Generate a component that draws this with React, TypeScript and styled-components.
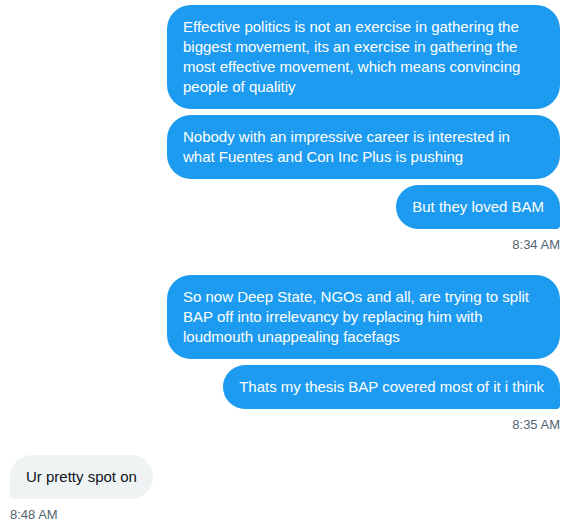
import React from "react";
import styled, { createGlobalStyle } from "styled-components";

const GlobalStyle = createGlobalStyle`
  html, body { margin: 0; padding: 0; background: #ffffff; }
  body { font-family: "Liberation Sans", Arial, sans-serif; }
`;

const Page = styled.div`
  width: 567px;
  height: 532px;
  box-sizing: border-box;
  padding: 5px 7px 0 10px;
  display: flex;
  flex-direction: column;
  gap: 22px;
  overflow: hidden;
`;

const Group = styled.div<{ $sent: boolean }>`
  display: flex;
  flex-direction: column;
  align-items: ${(p) => (p.$sent ? "flex-end" : "flex-start")};
`;

const Bubbles = styled.div<{ $sent: boolean }>`
  display: flex;
  flex-direction: column;
  gap: 6px;
  align-items: ${(p) => (p.$sent ? "flex-end" : "flex-start")};
`;

const Bubble = styled.div<{ $sent: boolean; $last: boolean }>`
  max-width: 393px;
  box-sizing: border-box;
  padding: 12px 16px;
  font-size: 15px;
  line-height: 20px;
  border-radius: 24px;
  background: ${(p) => (p.$sent ? "#1d9bf0" : "#eff3f4")};
  color: ${(p) => (p.$sent ? "#ffffff" : "#0f1419")};
  ${(p) =>
    p.$last
      ? p.$sent
        ? "border-bottom-right-radius: 4px;"
        : "border-bottom-left-radius: 4px;"
      : ""}
`;

const Time = styled.div`
  margin-top: 8px;
  font-size: 13px;
  line-height: 16px;
  color: #536471;
`;

type Msg = { sent: boolean; texts: string[]; time: string };

const messages: Msg[] = [
  {
    sent: true,
    texts: [
      "Effective politics is not an exercise in gathering the biggest movement, its an exercise in gathering the most effective movement, which means convincing people of qualitiy",
      "Nobody with an impressive career is interested in what Fuentes and Con Inc Plus is pushing",
      "But they loved BAM",
    ],
    time: "8:34 AM",
  },
  {
    sent: true,
    texts: [
      "So now Deep State, NGOs and all, are trying to split BAP off into irrelevancy by replacing him with loudmouth unappealing facefags",
      "Thats my thesis BAP covered most of it i think",
    ],
    time: "8:35 AM",
  },
  {
    sent: false,
    texts: ["Ur pretty spot on"],
    time: "8:48 AM",
  },
];

export default function App() {
  return (
    <>
      <GlobalStyle />
      <Page>
        {messages.map((m, i) => (
          <Group key={i} $sent={m.sent}>
            <Bubbles $sent={m.sent}>
              {m.texts.map((t, j) => (
                <Bubble key={j} $sent={m.sent} $last={j === m.texts.length - 1}>
                  {t}
                </Bubble>
              ))}
            </Bubbles>
            <Time>{m.time}</Time>
          </Group>
        ))}
      </Page>
    </>
  );
}
